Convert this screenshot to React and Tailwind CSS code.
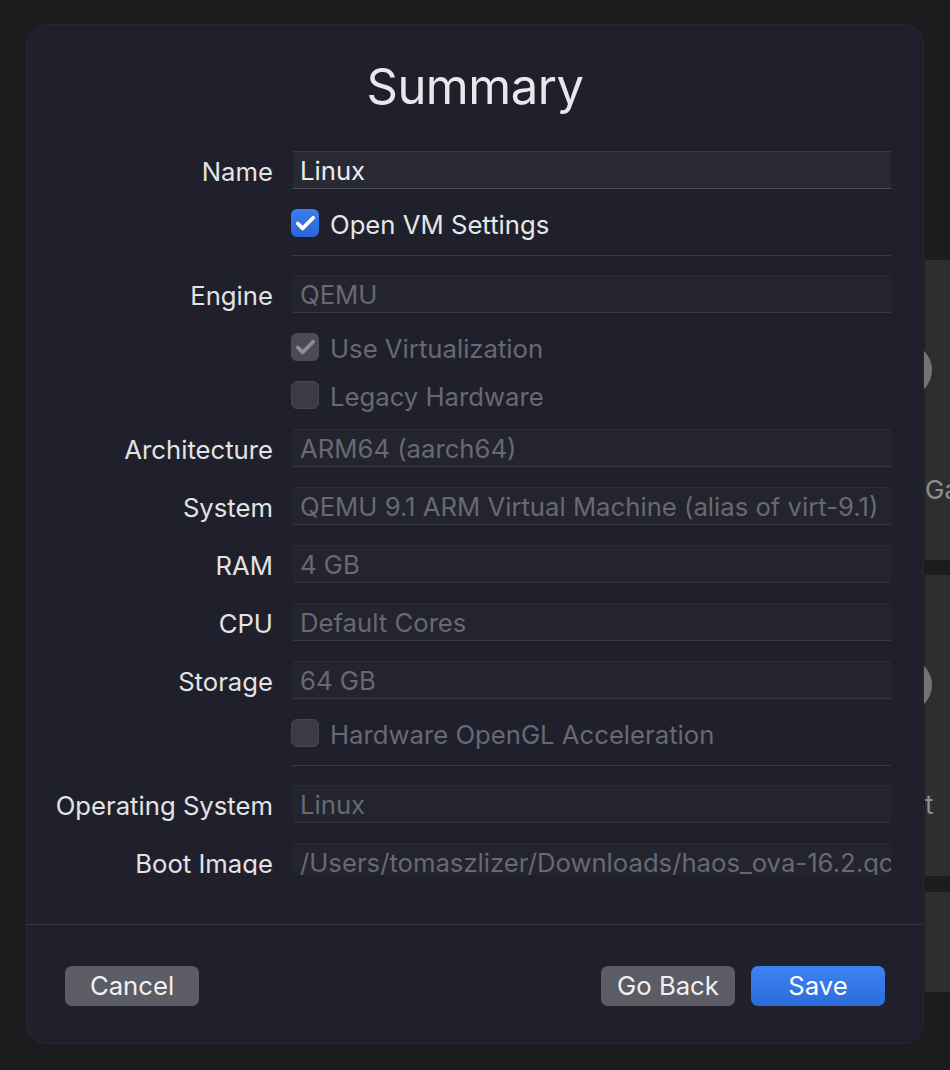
import { Check } from "lucide-react";

const Field = ({ label, value, enabled }) => (
  <div className="flex items-center h-[38px]">
    <div className="w-[246px] shrink-0 pt-[4px] text-right text-[#e3e3e6] whitespace-nowrap">
      {label}
    </div>
    <div
      className={
        enabled
          ? "ml-[20px] w-[598px] h-[38px] flex items-center pt-[3px] px-[7px] bg-[#282933] border-t border-t-[#363743] border-b border-b-[#4d4e58] text-[#ececee] overflow-hidden whitespace-nowrap"
          : "ml-[20px] w-[598px] h-[38px] flex items-center pt-[3px] px-[7px] bg-[#23242e] border-t border-t-[#2b2c37] border-b border-b-[#363743] text-[#686974] overflow-hidden whitespace-nowrap"
      }
    >
      {value}
    </div>
  </div>
);

const CheckRow = ({ label, checked, disabled }) => {
  let box = "bg-[#3a3b44] border border-[#45464f]";
  if (checked && !disabled) box = "bg-gradient-to-b from-[#3b7ff0] to-[#2966d6]";
  if (checked && disabled) box = "bg-[#4a4b53]";
  return (
    <div className="flex items-center h-[28px] pl-[264px]">
      <div className={"w-[28px] h-[28px] shrink-0 rounded-[6px] flex items-center justify-center " + box}>
        {checked && (
          <Check
            size={23}
            strokeWidth={4}
            className={disabled ? "text-[#8c8d94]" : "text-white"}
          />
        )}
      </div>
      <span className={"ml-[11px] pt-[4px] whitespace-nowrap " + (disabled ? "text-[#686974]" : "text-[#e6e6e8]")}>
        {label}
      </span>
    </div>
  );
};

const Divider = () => (
  <div className="ml-[264px] w-[600px] h-px bg-[#383945] -mt-0.5 -mb-px" />
);

const BgPanel = ({ top, height, text }) => (
  <div
    className="absolute left-[925px] w-[200px] bg-[#2e2e30]"
    style={{ top, height }}
  >
    <div className="absolute left-[-47px] top-[83px] w-[54px] h-[54px] rounded-full bg-[#737375]" />
    <div className="absolute left-0 top-[210px] text-[26px] text-[#8e8e90]">{text}</div>
  </div>
);

export default function App() {
  return (
    <div className="relative w-[950px] h-[1070px] bg-[#1c1c1e] overflow-hidden font-['Inter',sans-serif] text-[25.7px]">
      <BgPanel top={260} height={300} text="Ga" />
      <BgPanel top={575} height={301} text="t" />
      <div className="absolute left-[925px] top-[892px] w-[200px] h-[100px] bg-[#2e2e30]" />

      <div className="relative z-10 ml-[26px] mt-[24px] w-[898px] h-[1020px] rounded-[20px] bg-[#1f202b] border border-[#262733] flex flex-col overflow-hidden">
        <div className="h-[850px] shrink-0 overflow-hidden pt-[37px]">
          <h1 className="text-center text-[49px] leading-[50px] text-[#e8e8ea] tracking-[-0.01em]">
            Summary
          </h1>
          <div className="mt-[39px] flex flex-col gap-5">
            <Field label="Name" value="Linux" enabled />
            <CheckRow label="Open VM Settings" checked />
            <Divider />
            <Field label="Engine" value="QEMU" />
            <CheckRow label="Use Virtualization" checked disabled />
            <CheckRow label="Legacy Hardware" disabled />
            <Field label="Architecture" value="ARM64 (aarch64)" />
            <Field label="System" value="QEMU 9.1 ARM Virtual Machine (alias of virt-9.1)" />
            <Field label="RAM" value="4 GB" />
            <Field label="CPU" value="Default Cores" />
            <Field label="Storage" value="64 GB" />
            <CheckRow label="Hardware OpenGL Acceleration" disabled />
            <Divider />
            <Field label="Operating System" value="Linux" />
            <Field label="Boot Image" value="/Users/tomaszlizer/Downloads/haos_ova-16.2.qcow2" />
          </div>
        </div>

        <div className="h-[49px] shrink-0" />
        <div className="h-px shrink-0 bg-[#363743]" />

        <div className="flex items-center pt-[41px] pl-[38px] pr-[38px]">
          <button className="w-[134px] h-[40px] rounded-[7px] bg-[#5c5d64] text-[#f0f0f2]">
            Cancel
          </button>
          <div className="flex-1" />
          <button className="w-[134px] h-[40px] rounded-[7px] bg-[#5c5d64] text-[#f0f0f2]">
            Go Back
          </button>
          <button className="ml-[16px] w-[134px] h-[40px] rounded-[7px] bg-gradient-to-b from-[#3d83f2] to-[#2c6cdb] text-white">
            Save
          </button>
        </div>
      </div>
    </div>
  );
}
